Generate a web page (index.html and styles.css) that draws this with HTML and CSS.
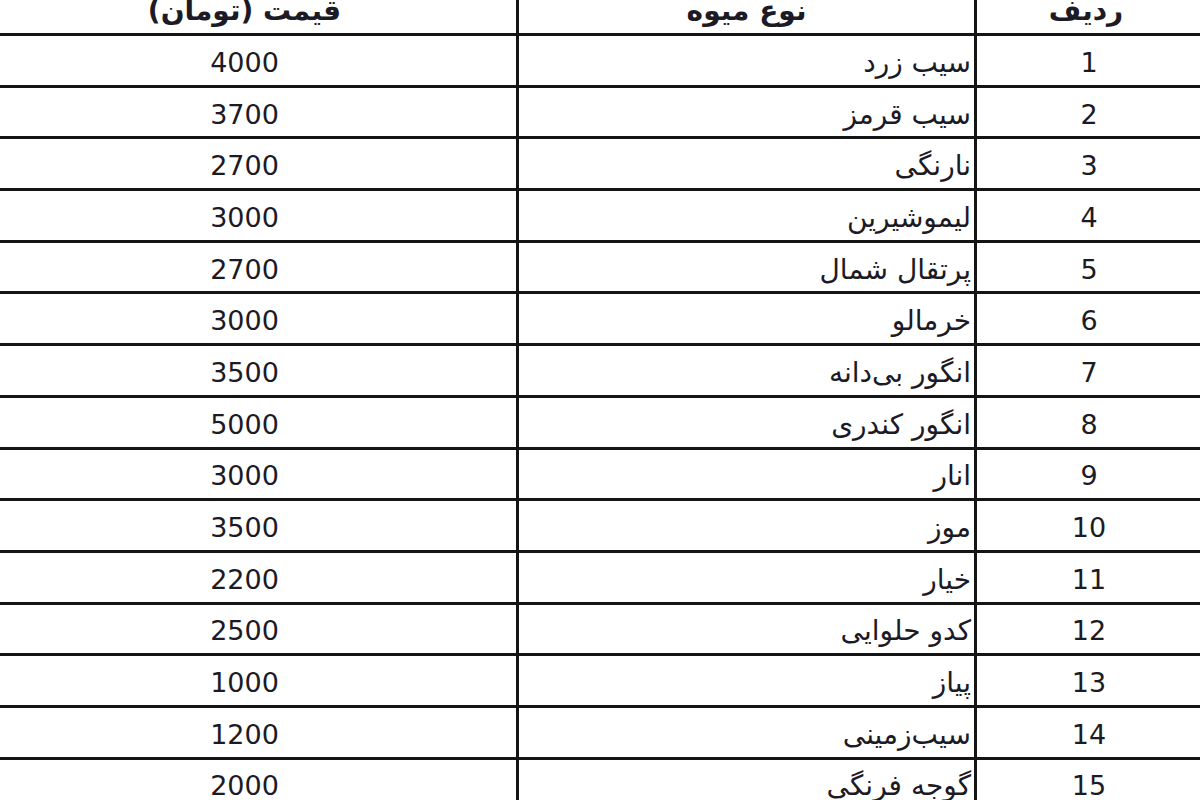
FILE: index.html
```html
<!DOCTYPE html>
<html lang="fa">
<head>
<meta charset="utf-8">
<title>قیمت میوه</title>
<link rel="stylesheet" href="styles.css">
</head>
<body>
<div class="sheet" dir="rtl">
  <div class="cell head rank">ردیف</div>
  <div class="cell head name">نوع میوه</div>
  <div class="cell head price">قیمت (تومان)</div>

  <div class="cell rank">1</div><div class="cell name">سیب زرد</div><div class="cell price">4000</div>
  <div class="cell rank">2</div><div class="cell name">سیب قرمز</div><div class="cell price">3700</div>
  <div class="cell rank">3</div><div class="cell name">نارنگی</div><div class="cell price">2700</div>
  <div class="cell rank">4</div><div class="cell name">لیموشیرین</div><div class="cell price">3000</div>
  <div class="cell rank">5</div><div class="cell name">پرتقال شمال</div><div class="cell price">2700</div>
  <div class="cell rank">6</div><div class="cell name">خرمالو</div><div class="cell price">3000</div>
  <div class="cell rank">7</div><div class="cell name">انگور بی‌دانه</div><div class="cell price">3500</div>
  <div class="cell rank">8</div><div class="cell name">انگور کندری</div><div class="cell price">5000</div>
  <div class="cell rank">9</div><div class="cell name">انار</div><div class="cell price">3000</div>
  <div class="cell rank">10</div><div class="cell name">موز</div><div class="cell price">3500</div>
  <div class="cell rank">11</div><div class="cell name">خیار</div><div class="cell price">2200</div>
  <div class="cell rank">12</div><div class="cell name">کدو حلوایی</div><div class="cell price">2500</div>
  <div class="cell rank">13</div><div class="cell name">پیاز</div><div class="cell price">1000</div>
  <div class="cell rank">14</div><div class="cell name">سیب‌زمینی</div><div class="cell price">1200</div>
  <div class="cell rank">15</div><div class="cell name">گوجه فرنگی</div><div class="cell price">2000</div>
</div>
</body>
</html>
```

FILE: styles.css
```css
html, body {
  margin: 0;
  padding: 0;
  overflow: hidden;
  background: #ffffff;
}

.sheet {
  display: grid;
  grid-template-columns: 227px 458px 543px;
  grid-auto-rows: 51.7px;
  width: 1228px;
  margin-top: -15.7px;
  margin-left: -27px;
  font-family: "DejaVu Sans", "Noto Sans", sans-serif;
  font-size: 27px;
  color: #1c1a24;
}

.cell {
  box-sizing: border-box;
  border-bottom: 3px solid #151515;
  display: flex;
  align-items: center;
  padding-top: 4px;
  white-space: nowrap;
}

.rank {
  justify-content: center;
  border-left: 3px solid #151515;
}

.name {
  justify-content: flex-start;
  padding-right: 3px;
  border-left: 3px solid #151515;
  font-size: 28px;
}

.price {
  justify-content: center;
}

.head {
  font-weight: bold;
  font-size: 28px;
  justify-content: center;
  padding-top: 4px;
  padding-right: 0;
}

.head.rank {
  padding-right: 6px;
}
```
